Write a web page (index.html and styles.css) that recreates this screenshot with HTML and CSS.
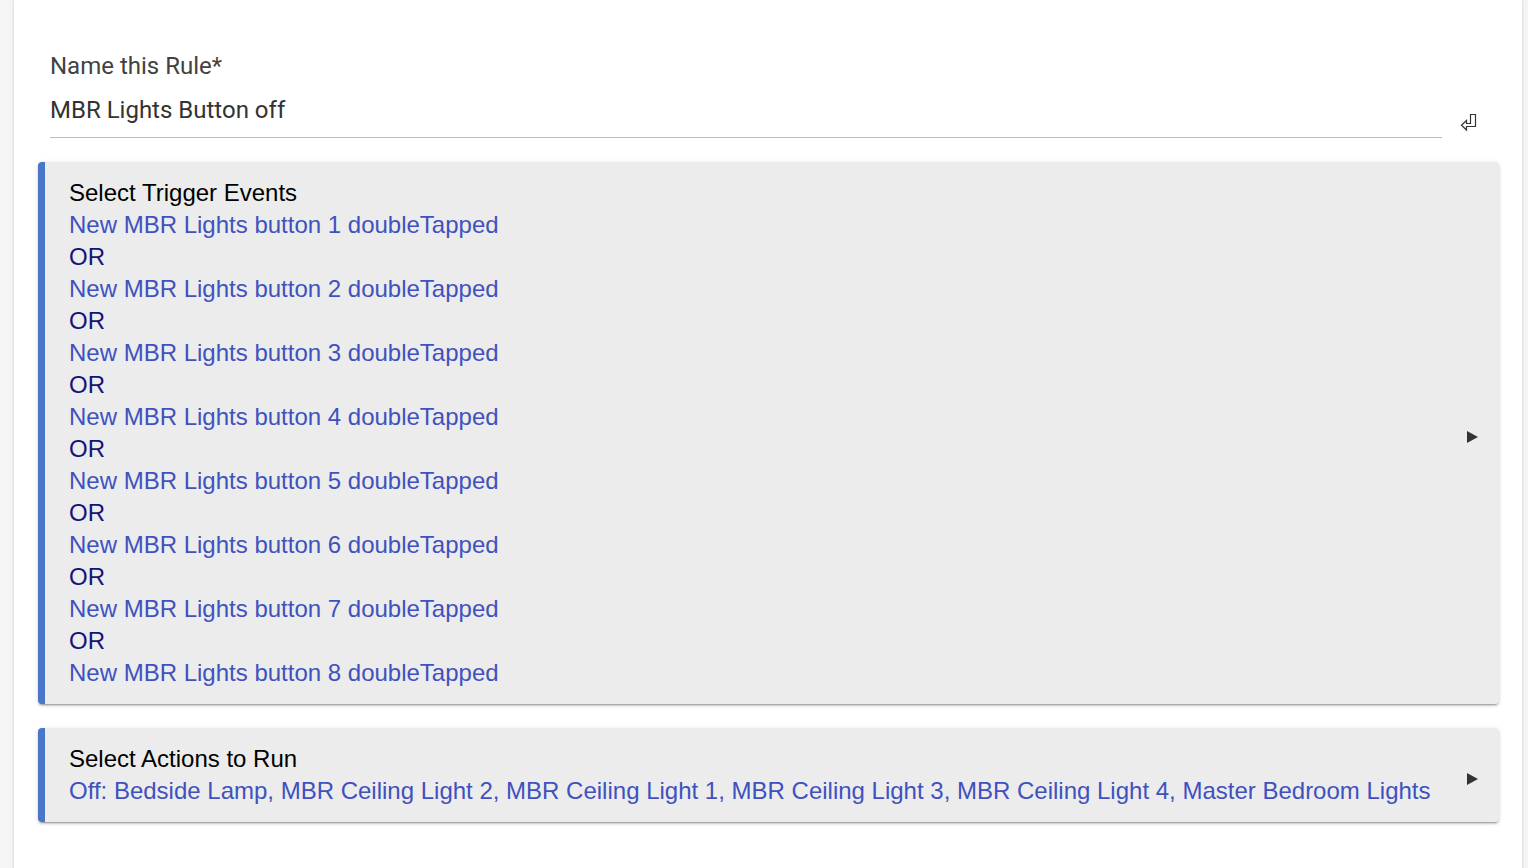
FILE: index.html
```html
<!DOCTYPE html>
<html>
<head>
<meta charset="utf-8">
<link rel="stylesheet" href="styles.css">
</head>
<body>
<div class="page">
  <div class="field">
    <div class="field-main">
      <div class="field-label">Name this Rule*</div>
      <div class="field-value">MBR Lights Button off</div>
    </div>
    <svg class="enter-icon" width="17" height="19" viewBox="0 0 17 19">
      <path d="M10.5 1.5 H15.5 V13.5 H6.5 V17 L1.5 12.2 L6.5 7.5 V10.5 H10.5 Z" fill="none" stroke="#333" stroke-width="1.2" stroke-linejoin="miter"/>
    </svg>
  </div>

  <div class="card">
    <div class="card-body">
      <div class="card-title">Select Trigger Events</div>
      <div class="link">New MBR Lights button 1 doubleTapped</div>
      <div class="or">OR</div>
      <div class="link">New MBR Lights button 2 doubleTapped</div>
      <div class="or">OR</div>
      <div class="link">New MBR Lights button 3 doubleTapped</div>
      <div class="or">OR</div>
      <div class="link">New MBR Lights button 4 doubleTapped</div>
      <div class="or">OR</div>
      <div class="link">New MBR Lights button 5 doubleTapped</div>
      <div class="or">OR</div>
      <div class="link">New MBR Lights button 6 doubleTapped</div>
      <div class="or">OR</div>
      <div class="link">New MBR Lights button 7 doubleTapped</div>
      <div class="or">OR</div>
      <div class="link">New MBR Lights button 8 doubleTapped</div>
    </div>
    <svg class="arrow" width="11" height="12" viewBox="0 0 11 12"><path d="M0 0 L11 6 L0 12 Z" fill="#333"/></svg>
  </div>

  <div class="card">
    <div class="card-body">
      <div class="card-title">Select Actions to Run</div>
      <div class="link">Off: Bedside Lamp, MBR Ceiling Light 2, MBR Ceiling Light 1, MBR Ceiling Light 3, MBR Ceiling Light 4, Master Bedroom Lights</div>
    </div>
    <svg class="arrow" width="11" height="12" viewBox="0 0 11 12"><path d="M0 0 L11 6 L0 12 Z" fill="#333"/></svg>
  </div>
</div>
</body>
</html>
```

FILE: styles.css
```css
html, body {
  margin: 0;
  padding: 0;
}
body {
  background: #f5f5f5;
  font-family: "Liberation Sans", Arial, sans-serif;
}
.page {
  margin-left: 14px;
  width: 1508px;
  min-height: 100vh;
  background: #ffffff;
  box-shadow: 0 0 3px rgba(0,0,0,0.18);
  box-sizing: border-box;
  padding: 48px 23px 40px 24px;
}
.field {
  display: flex;
  align-items: flex-end;
  padding-left: 12px;
  margin-bottom: 24px;
}
.field-main {
  width: 1392px;
  border-bottom: 1px solid #bdbdbd;
  font-family: Roboto, "Liberation Sans", sans-serif;
  padding-bottom: 7px;
}
.field-label {
  font-size: 24px;
  line-height: 36px;
  color: #424242;
}
.field-value {
  font-size: 24px;
  line-height: 40px;
  margin-top: 6px;
  color: #333333;
}
.enter-icon {
  margin-left: 18px;
  margin-bottom: 6px;
}
.card {
  display: flex;
  align-items: center;
  background: #ececec;
  border-left: 7px solid #4a76c7;
  border-radius: 4px;
  box-shadow: 0 2px 2px rgba(0,0,0,0.14), 0 3px 1px -2px rgba(0,0,0,0.2), 0 1px 5px rgba(0,0,0,0.12);
  padding: 15px 21px 15px 24px;
  margin-bottom: 24px;
}
.card-body {
  flex: 1;
  font-size: 24px;
  line-height: 32px;
}
.card-title {
  color: #000000;
}
.link {
  color: #3f51c0;
}
.or {
  color: #14147a;
}
.arrow {
  margin-top: 8px;
  flex: none;
}
```
